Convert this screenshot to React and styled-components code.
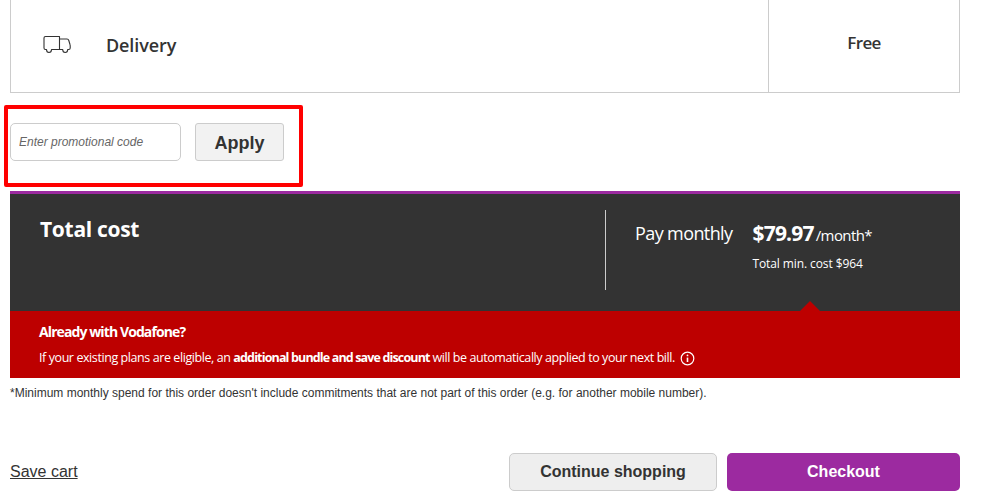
import styled, { createGlobalStyle } from "styled-components"

const GlobalStyle = createGlobalStyle`
  html, body {
    margin: 0;
    padding: 0;
    background: #fff;
    overflow: hidden;
  }
  body {
    font-family: "Liberation Sans", Arial, sans-serif;
    color: #333;
  }
`

const brandFont = `"Open Sans", "Noto Sans", sans-serif`

const Page = styled.div`
  width: 950px;
  height: 495px;
  padding-left: 10px;
  display: flex;
  flex-direction: column;
  position: relative;
`

const DeliveryRow = styled.div`
  display: grid;
  grid-template-columns: 757px 1fr;
  height: 92px;
  border: 1px solid #ccc;
  border-top: none;
  box-sizing: content-box;
  width: 948px;
`

const DeliveryLabel = styled.div`
  display: flex;
  align-items: center;
  padding-left: 32px;
  gap: 34px;
  font-family: ${brandFont};
  font-size: 18px;
  font-weight: 600;
  letter-spacing: -0.1px;
  color: #333;
  padding-bottom: 2px;
`

const DeliveryPrice = styled.div`
  border-left: 1px solid #ccc;
  display: flex;
  justify-content: center;
  padding-top: 31px;
  font-family: ${brandFont};
  font-size: 17px;
  font-weight: 600;
  letter-spacing: -0.6px;
  color: #333;
`

const PromoRow = styled.form`
  display: flex;
  gap: 14px;
  margin-top: 30px;
  height: 38px;
`

const PromoInput = styled.input`
  width: 171px;
  box-sizing: border-box;
  border: 1px solid #ccc;
  border-radius: 5px;
  padding: 0 8px;
  font-family: "Liberation Sans", Arial, sans-serif;
  font-size: 12px;
  outline: none;

  &::placeholder {
    font-style: italic;
    color: #666;
    opacity: 1;
  }
`

const ApplyButton = styled.button`
  width: 89px;
  border: 1px solid #ccc;
  border-radius: 3px;
  background: #f2f2f2;
  color: #333;
  font-family: "Liberation Sans", Arial, sans-serif;
  font-size: 18px;
  font-weight: 700;
  padding: 3px 0 0;
`

const Highlight = styled.div`
  position: absolute;
  left: 4px;
  top: 105px;
  width: 299px;
  height: 82px;
  box-sizing: border-box;
  border: 4px solid #f00;
  border-radius: 2px;
  pointer-events: none;
`

const TotalPanel = styled.section`
  margin-top: 30px;
  height: 117px;
  border-top: 3px solid #9c2aa0;
  background: #333;
  display: flex;
  justify-content: space-between;
  color: #fff;
  font-family: ${brandFont};
`

const TotalTitle = styled.h2`
  margin: 22px 0 0 30px;
  font-size: 21px;
  line-height: 26px;
  font-weight: 700;
  letter-spacing: -0.3px;
`

const PriceBlock = styled.div`
  width: 355px;
  height: 80px;
  margin-top: 16px;
  margin-bottom: 21px;
  border-left: 1px solid #ccc;
  box-sizing: border-box;
  padding: 10px 0 0 30px;
  display: flex;
  gap: 20px;
`

const PayLabel = styled.span`
  font-size: 18px;
  line-height: 26px;
  letter-spacing: -0.6px;
  font-weight: 400;
  margin-left: -1px;
`

const PriceColumn = styled.div`
  display: flex;
  flex-direction: column;
  gap: 8px;
`

const Price = styled.div`
  font-size: 15px;
  line-height: 26px;
  letter-spacing: -0.6px;
  white-space: nowrap;

  strong {
    font-size: 21px;
    font-weight: 700;
    letter-spacing: -0.8px;
    margin-right: 2px;
  }
`

const MinCost = styled.div`
  font-size: 12px;
  line-height: 16px;
  letter-spacing: -0.1px;
`

const DiscountBanner = styled.section`
  position: relative;
  height: 67px;
  background: #bd0000;
  color: #fff;
  font-family: ${brandFont};
  padding: 11px 0 0 29px;
  box-sizing: border-box;

  &::before {
    content: "";
    position: absolute;
    left: 790px;
    top: -10px;
    border-left: 10px solid transparent;
    border-right: 10px solid transparent;
    border-bottom: 10px solid #bd0000;
  }
`

const BannerTitle = styled.div`
  font-size: 14px;
  line-height: 20px;
  font-weight: 700;
  letter-spacing: -0.9px;
`

const BannerText = styled.div`
  display: flex;
  align-items: center;
  gap: 5px;
  margin-top: 7px;
  font-size: 12.5px;
  line-height: 18px;
  letter-spacing: -0.42px;
  white-space: pre;

  strong {
    font-weight: 700;
    letter-spacing: -0.85px;
  }
`

const Footnote = styled.p`
  margin: 8px 0 0;
  font-size: 12px;
  line-height: 14px;
  color: #333;
`

const Actions = styled.div`
  display: flex;
  align-items: center;
  margin-top: 53px;
  height: 38px;
  gap: 10px;
`

const SaveLink = styled.a`
  margin-right: auto;
  font-size: 16px;
  color: #333;
  text-decoration: underline;
`

const ActionButton = styled.button`
  height: 38px;
  width: ${props => props.$wide};
  box-sizing: border-box;
  border-radius: 5px;
  border: ${props => (props.$primary ? "none" : "1px solid #ccc")};
  background: ${props => (props.$primary ? "#9c2aa0" : "#eee")};
  color: ${props => (props.$primary ? "#fff" : "#333")};
  font-family: "Liberation Sans", Arial, sans-serif;
  font-size: 16px;
  font-weight: 700;
  padding: 0;
`

const TruckIcon = () => (
  <svg width="29" height="20" viewBox="0 0 29 20" fill="none" stroke="#333" strokeWidth="1.1" strokeLinejoin="round" strokeLinecap="round">
    <path d="M3.5 14.5H2.5C1.5 14.5 1 14 1 13V3C1 2 1.5 1.5 2.5 1.5H16.5V14.5H8.5C8.5 16.5 7.5 17.5 6 17.5C4.5 17.5 3.5 16.5 3.5 14.5Z" />
    <path d="M16.5 4H24C25 4 25.5 4.5 25.8 5.5L27 9.5C27.2 10 27.2 10.5 27.2 11V13C27.2 14 26.7 14.5 25.7 14.5H24.7C24.7 16.5 23.7 17.5 22.2 17.5C20.7 17.5 19.7 16.5 19.7 14.5H16.5" />
  </svg>
)

const InfoIcon = () => (
  <svg width="15" height="15" viewBox="0 0 15 15" fill="none" stroke="#fff">
    <circle cx="7.5" cy="7.5" r="6.3" strokeWidth="1.2" />
    <path d="M7.5 6.6V11" strokeWidth="1.6" />
    <circle cx="7.5" cy="4.4" r="0.9" fill="#fff" stroke="none" />
  </svg>
)

const App = () => {
  return (
    <Page>
      <GlobalStyle />
      <DeliveryRow>
        <DeliveryLabel>
          <TruckIcon />
          Delivery
        </DeliveryLabel>
        <DeliveryPrice>Free</DeliveryPrice>
      </DeliveryRow>

      <PromoRow>
        <PromoInput placeholder="Enter promotional code" />
        <ApplyButton type="button">Apply</ApplyButton>
      </PromoRow>
      <Highlight />

      <TotalPanel>
        <TotalTitle>Total cost</TotalTitle>
        <PriceBlock>
          <PayLabel>Pay monthly</PayLabel>
          <PriceColumn>
            <Price><strong>$79.97</strong>/month*</Price>
            <MinCost>Total min. cost $964</MinCost>
          </PriceColumn>
        </PriceBlock>
      </TotalPanel>

      <DiscountBanner>
        <BannerTitle>Already with Vodafone?</BannerTitle>
        <BannerText>
          <span>If your existing plans are eligible, an <strong>additional bundle and save discount</strong> will be automatically applied to your next bill.</span>
          <InfoIcon />
        </BannerText>
      </DiscountBanner>

      <Footnote>*Minimum monthly spend for this order doesn't include commitments that are not part of this order (e.g. for another mobile number).</Footnote>

      <Actions>
        <SaveLink href="#">Save cart</SaveLink>
        <ActionButton type="button" $wide="208px">Continue shopping</ActionButton>
        <ActionButton type="button" $wide="233px" $primary>Checkout</ActionButton>
      </Actions>
    </Page>
  )
}

export default App
